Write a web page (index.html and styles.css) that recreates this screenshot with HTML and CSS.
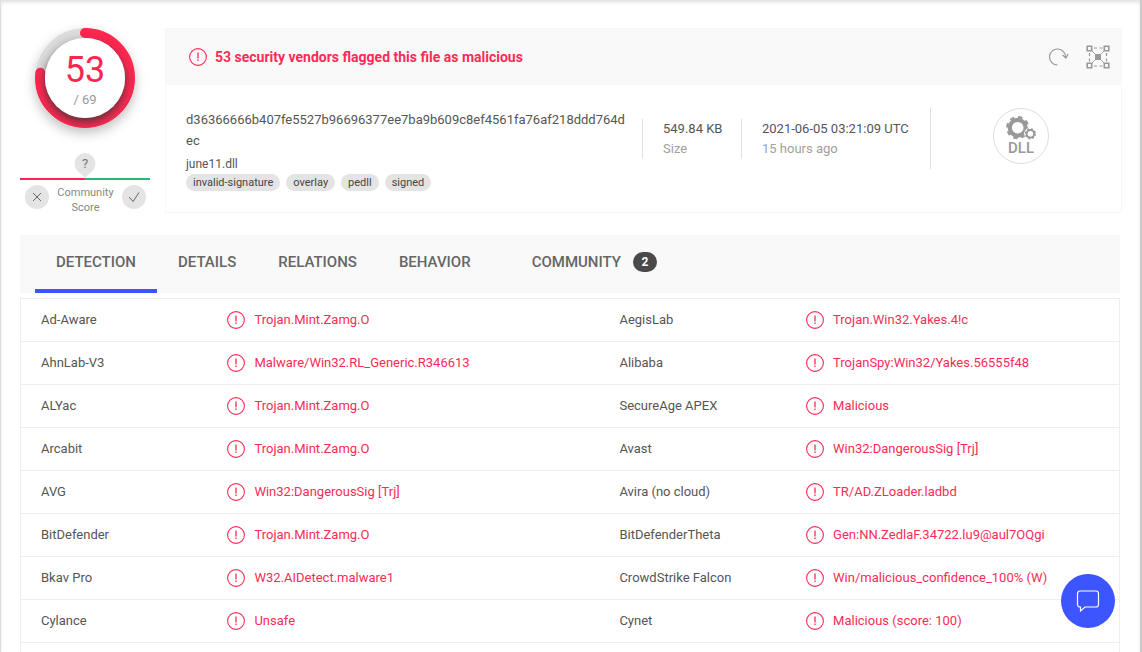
FILE: index.html
```html
<!DOCTYPE html>
<html lang="en">
<head>
<meta charset="utf-8">
<meta name="viewport" content="width=device-width, initial-scale=1">
<title>File report</title>
<link rel="stylesheet" href="styles.css">
</head>
<body>
<svg class="defs" aria-hidden="true">
  <symbol id="alert" viewBox="0 0 18 18">
    <circle cx="9" cy="9" r="8.4" fill="none" stroke="currentColor" stroke-width="1.1"/>
    <path d="M9 4.500v6M9 11.500v1.500" fill="none" stroke="currentColor" stroke-width="1.300"/>
  </symbol>
</svg>
<div class="page">
  <main class="main">
    <section class="summary">
      <aside class="score">
        <div class="gauge">
          <svg class="gauge-ring" viewBox="20 20 100 100" aria-hidden="true">
            <defs>
              <filter id="outer" x="-30%" y="-30%" width="160%" height="160%"><feDropShadow dx="0" dy="5" stdDeviation="6" flood-color="#000" flood-opacity=".25"/></filter>
              <filter id="inner" x="-30%" y="-30%" width="160%" height="160%"><feDropShadow dx="0" dy="4" stdDeviation="5" flood-color="#333" flood-opacity=".85"/></filter>
              <clipPath id="disc"><circle cx="70" cy="70" r="50"/></clipPath>
            </defs>
            <circle cx="70" cy="70" r="50" fill="#dcdcdc" filter="url(#outer)"/>
            <circle cx="70" cy="70" r="45" fill="none" stroke="#ff2750" stroke-width="10" stroke-linecap="round" stroke-dasharray="217 283" transform="rotate(-90 70 70)"/>
            <g clip-path="url(#disc)"><circle cx="70" cy="70" r="40" fill="#fff" filter="url(#inner)"/></g>
          </svg>
          <div class="gauge-text"><span class="hits">53</span><span class="total">/ 69</span></div>
        </div>
        <div class="community">
          <svg class="pin" viewBox="0 0 22 24" aria-hidden="true"><path d="M11 24 3.6 17.5A10.5 10.5 0 1 1 18.4 17.5Z" fill="#e4e4e4"/></svg>
          <span class="pin-mark">?</span>
          <div class="bar"></div>
          <div class="votes">
            <button class="vote" aria-label="Vote harmful"><svg viewBox="0 0 24 24"><path d="m8 8 8 8m0-8-8 8"/></svg></button>
            <span class="votes-label">Community Score</span>
            <button class="vote" aria-label="Vote harmless"><svg viewBox="0 0 24 24"><path d="m7 12 4 4.500 6-9"/></svg></button>
          </div>
        </div>
      </aside>
      <article class="card">
        <header class="card-head">
          <svg class="alert" aria-hidden="true"><use href="#alert"/></svg>
          <h1 class="verdict">53 security vendors flagged this file as malicious</h1>
          <button class="tool" aria-label="Reanalyze"><svg viewBox="0 0 24 24"><path d="M11.500 20A8 8 0 1 1 19.500 12.500"/><path d="m16.500 10 3.500 3 2-4"/></svg></button>
          <button class="tool" aria-label="Open graph"><svg viewBox="0 0 24 24"><path d="M4 4 20 20M20 4 4 20" stroke-width=".9"/><path d="M8 3h9M8 21h9M3.500 8v9M20.500 8v9" stroke-dasharray="3 2.500"/><path d="M9 9h6v6H9z" fill="#999" stroke="none"/><g class="nodes"><path d="M1.200 1.200h4.500v4.500H1.200zM18.300 1.200h4.500v4.500h-4.500zM1.200 18.300h4.500v4.500H1.200zM18.300 18.300h4.500v4.500h-4.500z"/></g></svg></button>
        </header>
        <div class="card-body">
          <div class="file">
            <div class="hash">d36366666b407fe5527b96696377ee7ba9b609c8ef4561fa76af218ddd764d<wbr>ec</div>
            <div class="name">june11.dll</div>
            <div class="tags"><a class="tag" href="#">invalid-signature</a><a class="tag" href="#">overlay</a><a class="tag" href="#">pedll</a><a class="tag" href="#">signed</a></div>
          </div>
          <div class="fact size"><span>549.84 KB</span><span class="muted">Size</span></div>
          <div class="fact date"><span>2021-06-05 03:21:09 UTC</span><span class="muted">15 hours ago</span></div>
          <div class="type">
            <div class="badge">
              <svg viewBox="0 0 30 24" aria-hidden="true">
                <circle cx="11.700" cy="11.700" r="7.900" fill="none" stroke="#999" stroke-width="4.200"/>
                <circle cx="11.700" cy="11.700" r="10.500" fill="none" stroke="#999" stroke-width="2.200" stroke-dasharray="4.400 3.850"/>
                <circle cx="24.400" cy="17.800" r="6.200" fill="#fff"/>
                <circle cx="24.400" cy="17.800" r="3.800" fill="none" stroke="#999" stroke-width="2"/>
                <circle cx="24.400" cy="17.800" r="4.900" fill="none" stroke="#999" stroke-width="1.400" stroke-dasharray="2 1.850"/>
              </svg>
              <span>DLL</span>
            </div>
          </div>
        </div>
      </article>
    </section>
    <nav class="tabs">
      <a class="tab active" href="#">DETECTION</a>
      <a class="tab" href="#">DETAILS</a>
      <a class="tab" href="#">RELATIONS</a>
      <a class="tab" href="#">BEHAVIOR</a>
      <a class="tab comments" href="#">COMMUNITY <span class="count">2</span></a>
    </nav>
    <div class="results">
      <table class="engines">
        <colgroup><col class="c1"><col class="c2"><col class="c3"><col></colgroup>
        <tbody>
          <tr><th scope="row">Ad-Aware</th><td><svg class="alert"><use href="#alert"/></svg>Trojan.Mint.Zamg.O</td><th scope="row">AegisLab</th><td><svg class="alert"><use href="#alert"/></svg>Trojan.Win32.Yakes.4!c</td></tr>
          <tr><th scope="row">AhnLab-V3</th><td><svg class="alert"><use href="#alert"/></svg>Malware/Win32.RL_Generic.R346613</td><th scope="row">Alibaba</th><td><svg class="alert"><use href="#alert"/></svg>TrojanSpy:Win32/Yakes.56555f48</td></tr>
          <tr><th scope="row">ALYac</th><td><svg class="alert"><use href="#alert"/></svg>Trojan.Mint.Zamg.O</td><th scope="row">SecureAge APEX</th><td><svg class="alert"><use href="#alert"/></svg>Malicious</td></tr>
          <tr><th scope="row">Arcabit</th><td><svg class="alert"><use href="#alert"/></svg>Trojan.Mint.Zamg.O</td><th scope="row">Avast</th><td><svg class="alert"><use href="#alert"/></svg>Win32:DangerousSig [Trj]</td></tr>
          <tr><th scope="row">AVG</th><td><svg class="alert"><use href="#alert"/></svg>Win32:DangerousSig [Trj]</td><th scope="row">Avira (no cloud)</th><td><svg class="alert"><use href="#alert"/></svg>TR/AD.ZLoader.ladbd</td></tr>
          <tr><th scope="row">BitDefender</th><td><svg class="alert"><use href="#alert"/></svg>Trojan.Mint.Zamg.O</td><th scope="row">BitDefenderTheta</th><td><svg class="alert"><use href="#alert"/></svg>Gen:NN.ZedlaF.34722.lu9@aul7OQgi</td></tr>
          <tr><th scope="row">Bkav Pro</th><td><svg class="alert"><use href="#alert"/></svg>W32.AIDetect.malware1</td><th scope="row">CrowdStrike Falcon</th><td><svg class="alert"><use href="#alert"/></svg>Win/malicious_confidence_100% (W)</td></tr>
          <tr><th scope="row">Cylance</th><td><svg class="alert"><use href="#alert"/></svg>Unsafe</td><th scope="row">Cynet</th><td><svg class="alert"><use href="#alert"/></svg>Malicious (score: 100)</td></tr>
        </tbody>
      </table>
    </div>
  </main>
  <button class="chat" aria-label="Open chat"><svg viewBox="0 0 24 24"><path d="M4 2h16a2.500 2.500 0 0 1 2.500 2.500v11A2.500 2.500 0 0 1 20 18H9l-4.500 4v-4H4a2.500 2.500 0 0 1-2.500-2.500v-11A2.500 2.500 0 0 1 4 2Z"/></svg></button>
</div>
</body>
</html>
```
FILE: styles.css
```css
* { box-sizing: border-box; }
body { margin: 0; background: #fff; color: #555; font: 13px/20px Roboto, "Liberation Sans", sans-serif; }
button { border: 0; padding: 0; background: none; cursor: pointer; font: inherit; }
a { color: inherit; text-decoration: none; }
.defs { position: absolute; width: 0; height: 0; }
.page { min-height: 100vh; display: flex; flex-direction: column; border-left: 1px solid #dcdfe3; border-right: 2px solid #cccac7; box-shadow: inset 0 3px 4px -1px #ddd; }
.main { flex: 1; display: flex; flex-direction: column; padding: 28px 18px 0 19px; }
.alert { width: 18px; height: 18px; flex: none; color: #f92c55; }

.summary { display: flex; align-items: flex-start; gap: 15px; margin-bottom: 20px; }
.score { width: 130px; display: flex; flex-direction: column; align-items: center; }
.gauge { display: grid; place-items: center; width: 100px; height: 100px; }
.gauge > * { grid-area: 1 / 1; }
.gauge-ring { width: 100px; height: 100px; overflow: visible; }
.gauge-text { z-index: 1; display: flex; flex-direction: column; align-items: center; }
.hits { color: #f92750; font-size: 36px; line-height: 43px; }
.total { color: #999; font-size: 13px; line-height: 15px; }
.community { width: 100%; display: grid; justify-items: center; margin-top: 25px; }
.pin { grid-area: 1 / 1; width: 22px; height: 25px; }
.pin-mark { grid-area: 1 / 1; font-size: 13px; line-height: 22px; color: #777; }
.bar { width: 100%; height: 2px; background: linear-gradient(90deg, #f92750 50%, #2cb673 50%); }
.votes { width: 100%; display: flex; align-items: flex-start; justify-content: space-between; padding: 5px 4px 0 5px; }
.vote { width: 24px; height: 24px; border-radius: 50%; background: #e4e4e4; }
.vote svg { display: block; fill: none; stroke: #666; stroke-width: 1; }
.votes-label { width: 60px; font-size: 11px; line-height: 15px; text-align: center; color: #888; }

.card { flex: 1; min-width: 0; border: 1px solid #f7f7f7; }
.card-head { display: flex; align-items: center; height: 56px; padding: 0 11px 0 23px; background: #f9f9f9; }
.verdict { flex: 1; margin: 0 0 0 8px; font-size: 14px; line-height: 20px; font-weight: 700; color: #f92c55; }
.tool { width: 24px; height: 24px; margin-left: 16px; }
.tool svg { display: block; fill: none; stroke: #999; stroke-width: 1.2; }
.nodes path { fill: #f9f9f9; stroke-width: 1.6; }
.card-body { display: flex; align-items: flex-start; padding: 23px 72px 21px 20px; }
.file { flex: 1; min-width: 0; padding-top: 1px; }
.hash { font-size: 13px; line-height: 21px; }
.name { margin-top: 5px; font-size: 12px; line-height: 16px; }
.tags { display: flex; gap: 6px; margin-top: 2px; }
.tag { padding: 0 7px; border-radius: 9px; background: #e4e4e4; color: #444; font-size: 11px; line-height: 17px; }
.fact { display: flex; flex-direction: column; padding-left: 20px; white-space: nowrap; margin-top: 11px; border-left: 1px solid #e0e0e0; }
.fact.size { width: 99px; margin-left: 19px; }
.fact.date { width: 189px; }
.muted { color: #a0a0a0; }
.type { height: 61px; padding-left: 62px; border-left: 1px solid #e0e0e0; }
.badge { display: flex; flex-direction: column; align-items: center; width: 56px; height: 56px; padding-top: 7px; border: 1px solid #ddd; border-radius: 50%; color: #999; font-size: 15px; line-height: 16px; font-weight: 500; }
.badge svg { width: 30px; height: 24px; }

.tabs { display: flex; height: 58px; margin: 0 2px 5px 0; padding-left: 15px; background: #f9f9f9; }
.tab { padding: 17px 21px 0; color: #666; font-size: 15px; font-weight: 500; border-bottom: 4px solid transparent; }
.tab.active { border-color: #3d55ff; }
.tab.comments { display: flex; align-items: flex-start; margin-left: 19px; }
.count { width: 24px; margin-left: 12px; border-radius: 10px; background: #4a4a4a; color: #fff; font-size: 12px; font-weight: 700; text-align: center; }

.results { flex: 1; margin-right: 2px; border: 1px solid #eee; border-bottom: 0; }
.engines { width: 100%; table-layout: fixed; border-collapse: separate; border-spacing: 0; }
.c1 { width: 18.8%; }
.c2 { width: 35.7%; }
.c3 { width: 17%; }
.engines th, .engines td { height: 43px; padding: 0; text-align: left; font-weight: 400; border-bottom: 1px solid #eee; }
.engines th:first-child { padding-left: 20px; }
.engines td { color: #f92c55; }
.engines .alert { margin-right: 9px; vertical-align: -5px; }

.chat { position: fixed; right: 27px; bottom: 24px; display: grid; place-items: center; width: 54px; height: 54px; border-radius: 50%; background: #3d55ff; }
.chat svg { width: 24px; height: 24px; fill: none; stroke: #fff; stroke-width: 1.2; }
```
